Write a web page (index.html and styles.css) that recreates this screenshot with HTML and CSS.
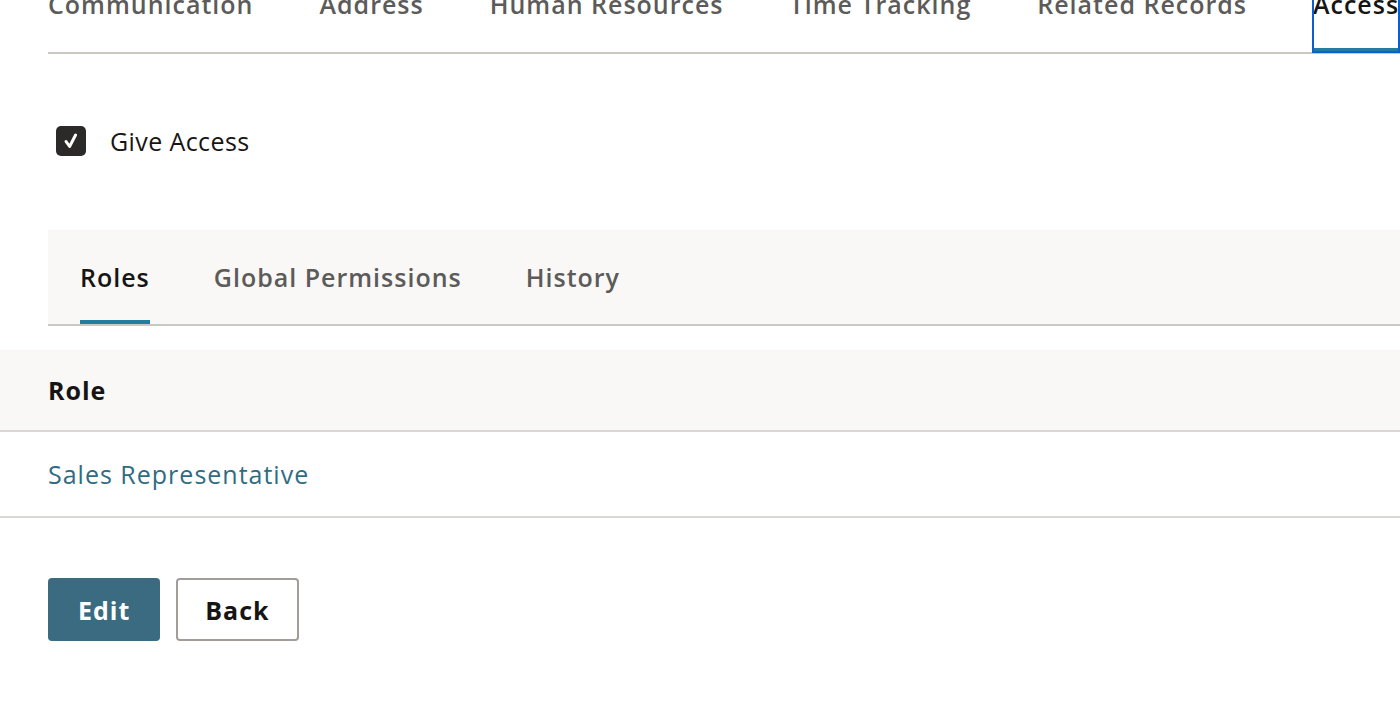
FILE: index.html
```html
<!DOCTYPE html>
<html lang="en">
<head>
  <meta charset="UTF-8">
  <meta name="viewport" content="width=device-width, initial-scale=1.0">
  <title>Employee - Access</title>
  <link rel="stylesheet" href="styles.css">
</head>
<body>
  <div class="page">
    <div class="main-tabs">
      <a class="main-tab">Communication</a>
      <a class="main-tab">Address</a>
      <a class="main-tab">Human Resources</a>
      <a class="main-tab">Time Tracking</a>
      <a class="main-tab">Related Records</a>
      <a class="main-tab active">Access</a>
    </div>

    <label class="checkbox-row">
      <span class="checkbox">
        <svg viewBox="0 0 24 24" fill="none" stroke="white" stroke-width="3.2" stroke-linecap="round" stroke-linejoin="round">
          <path d="M6.5 12.5 10.5 18 17 5.5" />
        </svg>
      </span>
      <span class="checkbox-label">Give Access</span>
    </label>

    <div class="sub-tabs">
      <a class="sub-tab active">Roles</a>
      <a class="sub-tab">Global Permissions</a>
      <a class="sub-tab">History</a>
    </div>
  </div>

  <table class="roles-table">
    <thead>
      <tr><th>Role</th></tr>
    </thead>
    <tbody>
      <tr><td><a class="role-link">Sales Representative</a></td></tr>
    </tbody>
  </table>

  <div class="page">
    <div class="actions">
      <button class="btn btn-primary">Edit</button>
      <button class="btn btn-secondary">Back</button>
    </div>
  </div>
</body>
</html>
```

FILE: styles.css
```css
body {
  margin: 0;
  font-family: "Open Sans", "Noto Sans", sans-serif;
  font-size: 25px;
  letter-spacing: 1px;
  color: #161513;
  background: #fff;
  overflow: hidden;
}
.page {
  padding-left: 48px;
}

/* tabs de cima (cortados pelo scroll) */
.main-tabs {
  display: flex;
  gap: 66px;
  margin-top: -12px;
  border-bottom: 2px solid #cbc8c4;
}
.main-tab {
  font-weight: 600;
  line-height: 32px;
  color: #5c5b59;
  padding-bottom: 32px;
  white-space: nowrap;
}
.main-tab.active {
  color: #161513;
  box-shadow: inset 0 -4px 0 #227e9e;
  outline: 2px solid #0b5fd0;
  outline-offset: -1px;
}

/* checkbox */
.checkbox-row {
  display: flex;
  align-items: center;
  gap: 24px;
  padding: 72px 0 0 8px;
  height: 30px;
}
.checkbox {
  width: 30px;
  height: 30px;
  border-radius: 5px;
  background: #2b2a28;
  display: flex;
  align-items: center;
  justify-content: center;
}
.checkbox svg {
  width: 22px;
  height: 22px;
}
.checkbox-label {
  letter-spacing: 0.4px;
}

/* sub tabs */
.sub-tabs {
  display: flex;
  gap: 64px;
  margin-top: 74px;
  padding-left: 32px;
  background: #f9f8f6;
  border-bottom: 2px solid #cbc8c4;
}
.sub-tab {
  font-weight: 600;
  line-height: 32px;
  color: #5c5b59;
  padding: 31px 0;
}
.sub-tab.active {
  color: #161513;
  box-shadow: inset 0 -4px 0 #227e9e;
}

/* tabela */
.roles-table {
  width: 100%;
  border-collapse: collapse;
  margin-top: 24px;
}
.roles-table th {
  text-align: left;
  font-weight: 700;
  height: 80px;
  padding: 0 0 0 48px;
  background: #f9f8f6;
  border-bottom: 2px solid #dbd8d4;
}
.roles-table td {
  height: 84px;
  padding: 0 0 0 48px;
  border-bottom: 2px solid #dbd8d4;
}
.role-link {
  color: #2f6c84;
}

/* botoes */
.actions {
  display: flex;
  gap: 16px;
  padding-top: 60px;
}
.btn {
  height: 63px;
  font-family: inherit;
  font-size: 25px;
  font-weight: 700;
  letter-spacing: 1px;
  border-radius: 4px;
  cursor: pointer;
}
.btn-primary {
  background: #3a6b81;
  color: #fff;
  border: none;
  padding: 0 30px;
}
.btn-secondary {
  background: #fff;
  color: #161513;
  border: 2px solid #a29d98;
  padding: 0 27px;
}
```
